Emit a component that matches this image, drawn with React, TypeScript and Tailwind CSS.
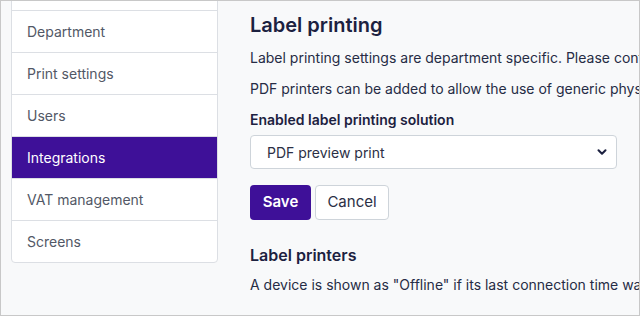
import { ChevronDown } from "lucide-react";

const items = ["", "Department", "Print settings", "Users", "Integrations", "VAT management", "Screens"];

function Sidebar({ active }: { active: string }) {
  return (
    <div className="-mt-[34px] ml-[10px] h-fit w-[207px] shrink-0 overflow-hidden rounded-[4px] border border-[#dcdfe4] bg-white">
      {items.map((item, i) => (
        <div
          key={i}
          className={
            "flex h-[42px] items-center px-[15px] text-[14px] " +
            (i > 0 ? "border-t border-[#dcdfe4] " : "") +
            (item === active
              ? "border-[#3e1098] bg-[#3e1098] text-white"
              : "text-[#525866]")
          }
        >
          {item}
        </div>
      ))}
    </div>
  );
}

export default function App() {
  return (
    <div
      className="flex h-[316px] w-[640px] overflow-hidden border border-[#c8c8c8] bg-[#f8f9fa]"
      style={{ fontFamily: "Inter, 'Noto Sans', sans-serif" }}
    >
      <Sidebar active="Integrations" />
      <main className="ml-[32px] min-w-0 flex-1 whitespace-nowrap pt-[11px] text-[14px] text-[#262c45]">
        <h2 className="text-[20px] font-semibold leading-[26px] text-[#1c2140]">Label printing</h2>
        <p className="mt-[9px] leading-[21px]">
          Label printing settings are department specific. Please contact support to change them.
        </p>
        <p className="mt-[10px] leading-[21px]">
          PDF printers can be added to allow the use of generic physical printers.
        </p>
        <label className="mt-[10px] block font-semibold leading-[21px] text-[#1c2140]">
          Enabled label printing solution
        </label>
        <div className="mt-[5px] flex h-[34px] w-[367px] items-center justify-between rounded-[4px] border border-[#ced4da] bg-white pl-[16px] pr-[7px] text-[14px] text-[#2b2f45]">
          <span>PDF preview print</span>
          <ChevronDown className="h-[14px] w-[14px] text-[#1c2140]" strokeWidth={3.5} />
        </div>
        <div className="mt-[16px] flex gap-[4px]">
          <button className="h-[35px] w-[61px] rounded-[4px] bg-[#3e1098] text-[15px] font-semibold text-white">
            Save
          </button>
          <button className="h-[35px] w-[74px] rounded-[4px] border border-[#ced4da] bg-white text-[15px] text-[#2b2f45]">
            Cancel
          </button>
        </div>
        <h3 className="mt-[24px] text-[16px] font-semibold leading-[22px] text-[#1c2140]">Label printers</h3>
        <p className="mt-[8px] leading-[21px]">
          A device is shown as "Offline" if its last connection time was more than 5 minutes ago.
        </p>
      </main>
    </div>
  );
}
